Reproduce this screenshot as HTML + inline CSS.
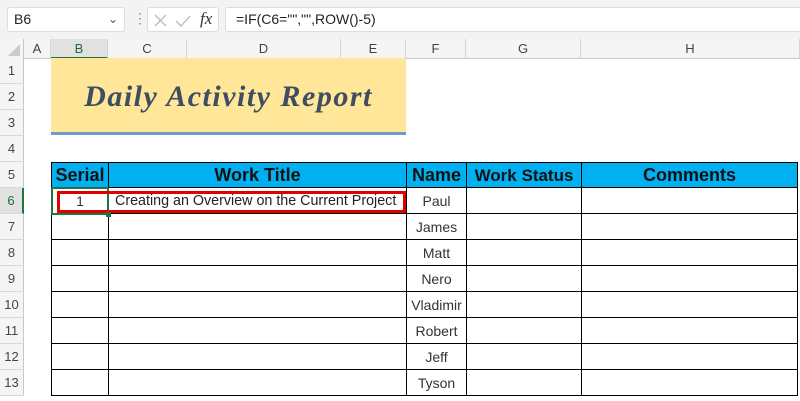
<!DOCTYPE html>
<html><head><meta charset="utf-8"><style>
*{margin:0;padding:0;box-sizing:border-box}
html,body{width:800px;height:401px;overflow:hidden}
body{background:#fff;font-family:"Liberation Sans",sans-serif;position:relative}
.a{position:absolute}
.ch{position:absolute;top:39px;height:20px;font-size:13px;color:#444;text-align:center;line-height:20px;border-right:1px solid #d4d4d4;background:#f5f5f5;border-bottom:1px solid #c8c8c8}
.rh{position:absolute;left:0;width:24px;font-size:13px;color:#444;text-align:center;line-height:26px;height:26px;background:#f5f5f5;border-bottom:1px solid #d8d8d8;border-right:1px solid #c8c8c8}
.c{position:absolute;border:1px solid #000;font-size:14px;text-align:center;color:#333}
.h{position:absolute;font-weight:bold;font-size:18px;color:#111;text-align:center;line-height:25px;top:162px;height:26px;background:#00b0f0;border:1px solid #000;white-space:nowrap;overflow:hidden}
</style></head><body>
<div class="a" style="left:0;top:0;width:800px;height:39px;background:#f3f3f3"></div>
<div class="a" style="left:7px;top:7px;width:118px;height:25px;background:#fff;border:1px solid #ddd;border-radius:3px;font-size:14px;line-height:23px;padding-left:6px;color:#222">B6<span style="position:absolute;right:6px;top:0;color:#555;font-size:12px">&#8964;</span></div>
<div class="a" style="left:133px;top:10px;color:#888;font-size:14px">&#8942;</div>
<div class="a" style="left:147px;top:7px;width:72px;height:25px;background:#fff;border:1px solid #ddd;border-radius:3px">
<svg width="72" height="25" style="position:absolute;left:0;top:0"><path d="M7 7l11 11M18 7L7 18" stroke="#bbb" stroke-width="1.3"/><path d="M28 13l5 5 9-10" stroke="#bbb" stroke-width="1.3" fill="none"/></svg>
<span style="position:absolute;left:52px;top:1px;font-family:'Liberation Serif',serif;font-style:italic;font-size:17px;color:#333">fx</span></div>
<div class="a" style="left:225px;top:7px;width:580px;height:25px;background:#fff;border:1px solid #ddd;border-radius:3px;font-size:14px;line-height:23px;padding-left:10px;color:#222">=IF(C6="","",ROW()-5)</div>
<div class="a" style="left:0;top:39px;width:24px;height:20px;background:#f5f5f5;border-right:1px solid #c8c8c8;border-bottom:1px solid #c8c8c8"><svg width="24" height="20"><path d="M20 17H8L20 5z" fill="#ccc"/></svg></div>
<div class="ch" style="left:24px;width:27px">A</div>
<div class="ch" style="left:51px;width:57px;background:#e1e1e1;color:#1e6b3a;border-bottom:2px solid #217346">B</div>
<div class="ch" style="left:108px;width:79px">C</div>
<div class="ch" style="left:187px;width:154px">D</div>
<div class="ch" style="left:341px;width:65px">E</div>
<div class="ch" style="left:406px;width:60px">F</div>
<div class="ch" style="left:466px;width:115px">G</div>
<div class="ch" style="left:581px;width:219px">H</div>
<div class="rh" style="top:58px">1</div><div class="rh" style="top:84px">2</div><div class="rh" style="top:110px">3</div><div class="rh" style="top:136px">4</div><div class="rh" style="top:162px">5</div>
<div class="rh" style="top:188px;background:#e1e1e1;color:#1e6b3a;border-right:2px solid #217346">6</div>
<div class="rh" style="top:214px">7</div><div class="rh" style="top:240px">8</div><div class="rh" style="top:266px">9</div><div class="rh" style="top:292px">10</div><div class="rh" style="top:318px">11</div><div class="rh" style="top:344px">12</div><div class="rh" style="top:370px">13</div>
<div class="a" style="left:51px;top:58px;width:355px;height:77px;background:#ffe699;border-bottom:3px solid #6d9dd0;font-family:'Liberation Serif',serif;font-weight:bold;font-style:italic;font-size:30px;color:#3e4d62;text-align:center;line-height:77px;letter-spacing:1.5px;white-space:nowrap">Daily Activity Report</div>
<div class="h" style="left:51px;width:58px">Serial</div>
<div class="h" style="left:108px;width:299px">Work Title</div>
<div class="h" style="left:406px;width:61px">Name</div>
<div class="h" style="left:466px;width:116px;font-size:17px">Work Status</div>
<div class="h" style="left:581px;width:217px">Comments</div>
<div id="g"></div>
<script>
var names=["Paul","James","Matt","Nero","Vladimir","Robert","Jeff","Tyson"];
var cols=[[51,58],[108,299],[406,61],[466,116],[581,217]];var h="";
for(var r=0;r<8;r++){var t=187+r*26;
for(var c=0;c<5;c++){var txt="";if(c==2)txt=names[r];if(r==0&&c==0)txt="1";if(r==0&&c==1)txt="Creating an Overview on the Current Project";
h+='<div class="c" style="left:'+cols[c][0]+'px;top:'+t+'px;width:'+cols[c][1]+'px;height:27px;line-height:26px;'+(c==1?'text-align:left;padding-left:6px;font-size:14.3px;color:#222;white-space:nowrap':'')+(c==2?'color:#333;font-size:14px':'')+'">'+txt+'</div>';}}
document.getElementById("g").innerHTML=h;
</script>
<div class="a" style="left:51px;top:187px;width:58px;height:28px;border:2px solid #217346"></div>
<div class="a" style="left:57px;top:191px;width:349px;height:22px;border:3px solid #e00000"></div>
<div class="a" style="left:106px;top:212px;width:5px;height:5px;background:#217346"></div>
</body></html>
